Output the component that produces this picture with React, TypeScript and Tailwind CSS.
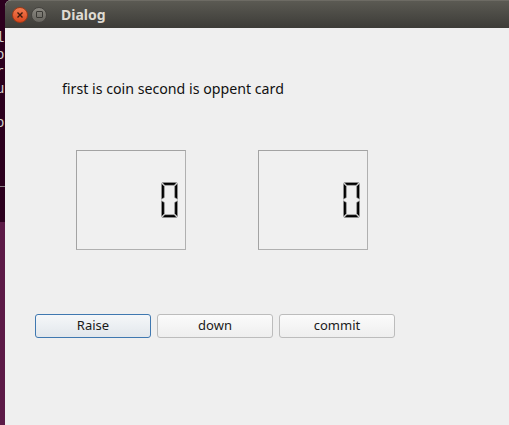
const Digit = () => (
  <svg width="17" height="36" viewBox="0 0 17 36">
    <g fill="#000" stroke="#9a9a9a" strokeWidth="0.6" strokeLinejoin="round">
      <polygon points="1.2,0.5 15.8,0.5 13.3,3.3 3.7,3.3" />
      <polygon points="0.5,1.5 3.3,4.3 3.3,15.5 0.5,17.3" />
      <polygon points="16.5,1.5 16.5,17.3 13.7,15.5 13.7,4.3" />
      <polygon points="0.5,18.7 3.3,20.5 3.3,31.7 0.5,34.5" />
      <polygon points="16.5,18.7 16.5,34.5 13.7,31.7 13.7,20.5" />
      <polygon points="1.2,35.5 3.7,32.7 13.3,32.7 15.8,35.5" />
    </g>
  </svg>
);

const LcdBox = () => (
  <div className="w-[110px] h-[100px] border border-t-[#a3a3a3] border-l-[#a3a3a3] border-r-[#b0b0b0] border-b-[#b0b0b0] bg-[#f0f0f0] flex items-center justify-end pr-[7px]">
    <Digit />
  </div>
);

const Btn = ({ label, primary }: { label: string; primary?: boolean }) => (
  <button
    className={
      "w-[116px] h-[24px] rounded-[3px] border text-[13px] text-[#1a1a1a] flex items-center justify-center " +
      (primary
        ? "border-[#3f78b0] bg-gradient-to-b from-[#f5f7f9] to-[#e2e7ec]"
        : "border-[#bcbcbc] bg-gradient-to-b from-[#fbfbfb] to-[#eeeeee]")
    }
  >
    {label}
  </button>
);

export default function App() {
  return (
    <div
      className="w-[509px] h-[425px] flex overflow-hidden bg-[#2c001e]"
      style={{ fontFamily: '"Noto Sans", "Open Sans", sans-serif' }}
    >
      {/* terminal behind the dialog */}
      <div className="w-[5px] shrink-0 flex flex-col overflow-hidden">
        <div className="h-[186px] bg-[#2c001e] overflow-hidden pt-[30px] leading-[17px] text-[14px] text-[#d0cfcc] font-mono">
          <div className="-ml-[4px]">l</div>
          <div className="-ml-[4px]">o</div>
          <div className="-ml-[4px]">r</div>
          <div className="-ml-[4px]">u</div>
          <div className="-ml-[4px]">&nbsp;</div>
          <div className="-ml-[4px]">o</div>
        </div>
        <div className="h-[1px] bg-[#8a7f86]" />
        <div className="h-[35px] bg-[#2c001e]" />
        <div className="flex-1 bg-[#5c1a47]" />
      </div>

      {/* dialog window */}
      <div className="flex-1 flex flex-col bg-[#efefef] rounded-tl-[6px] overflow-hidden">
        <div className="h-[28px] shrink-0 flex items-center bg-gradient-to-b from-[#5b5a53] to-[#3d3c38] border-t border-[#6d6b64]">
          <div className="ml-[7px] w-[16px] h-[16px] rounded-full bg-gradient-to-b from-[#f37b4f] to-[#d8461c] border border-[#9f3a17] flex items-center justify-center">
            <svg width="8" height="8" viewBox="0 0 8 8">
              <path d="M1.5 1.5 L6.5 6.5 M6.5 1.5 L1.5 6.5" stroke="#3b1a0c" strokeWidth="1.4" />
            </svg>
          </div>
          <div className="ml-[3px] w-[16px] h-[16px] rounded-full bg-gradient-to-b from-[#8a8881] to-[#67655f] border border-[#45433f] flex items-center justify-center">
            <div className="w-[7px] h-[7px] border-[1.5px] border-[#3a3935] rounded-[1px]" />
          </div>
          <span className="ml-[14px] text-[14px] font-bold text-[#dfdbd2]">Dialog</span>
        </div>

        <div className="flex flex-col pt-[51px]">
          <div className="pl-[57px] text-[14.2px] leading-[20px] text-[#111]">
            first is coin second is oppent card
          </div>
          <div className="flex gap-[72px] pl-[71px] mt-[51px]">
            <LcdBox />
            <LcdBox />
          </div>
          <div className="flex gap-[6px] pl-[30px] mt-[64px]">
            <Btn label="Raise" primary />
            <Btn label="down" />
            <Btn label="commit" />
          </div>
        </div>
      </div>
    </div>
  );
}
